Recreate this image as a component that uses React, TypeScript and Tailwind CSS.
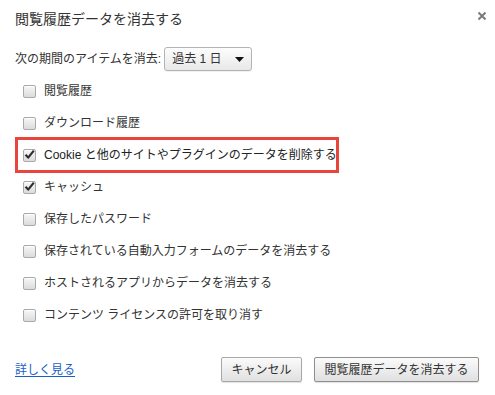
import { useState } from "react";

const font = "font-['Liberation_Sans','Noto_Sans_CJK_JP',sans-serif]";

type Item = { id: string; label: string; checked: boolean; highlight?: boolean };

const initialItems: Item[] = [
  { id: "history", label: "閲覧履歴", checked: false },
  { id: "downloads", label: "ダウンロード履歴", checked: false },
  {
    id: "cookies",
    label: "Cookie と他のサイトやプラグインのデータを削除する",
    checked: true,
    highlight: true
  },
  { id: "cache", label: "キャッシュ", checked: true },
  { id: "passwords", label: "保存したパスワード", checked: false },
  { id: "autofill", label: "保存されている自動入力フォームのデータを消去する", checked: false },
  { id: "hosted", label: "ホストされるアプリからデータを消去する", checked: false },
  { id: "licenses", label: "コンテンツ ライセンスの許可を取り消す", checked: false }
];

function Checkbox({ checked, onToggle }: { checked: boolean; onToggle: () => void }) {
  return (
    <button
      type="button"
      role="checkbox"
      aria-checked={checked}
      onClick={onToggle}
      className="flex h-[13px] w-[13px] shrink-0 items-center justify-center rounded-[2px] border border-[#a9a9a9] bg-gradient-to-b from-[#f6f6f6] to-[#dcdcdc] shadow-[inset_0_1px_0_#fff]"
    >
      {checked ? (
        <svg width="11" height="11" viewBox="0 0 11 11" className="-mt-[1px]">
          <path
            d="M1.5 5.8 L4.2 8.6 L9.8 1.6"
            fill="none"
            stroke="#2f2f2f"
            strokeWidth="2.2"
            strokeLinejoin="round"
          />
        </svg>
      ) : null}
    </button>
  );
}

export default function App() {
  const [items, setItems] = useState(initialItems);

  function toggle(id: string) {
    setItems((current) =>
      current.map((item) => (item.id === id ? { ...item, checked: !item.checked } : item))
    );
  }

  return (
    <div className={`${font} h-[395px] w-[495px] overflow-hidden bg-white text-[#333]`}>
      <div className="flex items-start justify-between pl-[15px] pr-[7px] pt-[9px]">
        <h1 className="text-[14px] leading-[20px] text-[#333]">閲覧履歴データを消去する</h1>
        <button type="button" aria-label="閉じる" className="mt-[1px] p-[1px]">
          <svg width="10" height="10" viewBox="0 0 10 10">
            <path d="M1.5 1.5 L8.5 8.5 M8.5 1.5 L1.5 8.5" stroke="#7a7a7a" strokeWidth="2" />
          </svg>
        </button>
      </div>

      <div className="mt-[18px] flex items-center gap-[3px] pl-[15px] text-[12px]">
        <span>次の期間のアイテムを消去:</span>
        <div className="flex h-[24px] w-[88px] items-center justify-between rounded-[3px] border border-[#b4b4b4] bg-gradient-to-b from-[#fdfdfd] to-[#e8e8e8] pl-[7px] pr-[7px] text-[#333] shadow-[0_1px_0_rgba(0,0,0,0.05)]">
          <span>過去 1 日</span>
          <svg width="9" height="5" viewBox="0 0 9 5">
            <path d="M0 0 H9 L4.5 5 Z" fill="#111" />
          </svg>
        </div>
      </div>

      <div className="mt-[4px] flex flex-col">
        {items.map((item) =>
          item.highlight ? (
            <div
              key={item.id}
              className="relative z-10 ml-[15px] -my-[2px] flex h-[36px] w-[324px] items-center gap-[8px] border-[3px] border-[#e8453c] pl-[5px] text-[12px] text-[#222]"
            >
              <Checkbox checked={item.checked} onToggle={() => toggle(item.id)} />
              <span className="whitespace-nowrap">{item.label}</span>
            </div>
          ) : (
            <div
              key={item.id}
              className="flex h-[32px] items-center gap-[8px] pl-[23px] text-[12px] text-[#333]"
            >
              <Checkbox checked={item.checked} onToggle={() => toggle(item.id)} />
              <span>{item.label}</span>
            </div>
          )
        )}
      </div>

      <div className="mt-[26px] flex items-center justify-between pl-[15px] pr-[16px]">
        <a href="#" className="text-[12px] text-[#1a5fc9] underline underline-offset-2">
          詳しく見る
        </a>
        <div className="flex gap-[12px]">
          <button
            type="button"
            className="h-[25px] w-[81px] rounded-[2px] border border-[#a8a8a8] bg-gradient-to-b from-[#fbfbfb] to-[#e0e0e0] text-[12px] text-[#333] shadow-[0_1px_1px_rgba(0,0,0,0.12)]"
          >
            キャンセル
          </button>
          <button
            type="button"
            className="h-[25px] w-[165px] rounded-[2px] border border-[#8f8f8f] bg-gradient-to-b from-[#fbfbfb] to-[#e0e0e0] text-[12px] text-[#333] shadow-[0_1px_1px_rgba(0,0,0,0.12)]"
          >
            閲覧履歴データを消去する
          </button>
        </div>
      </div>
    </div>
  );
}
